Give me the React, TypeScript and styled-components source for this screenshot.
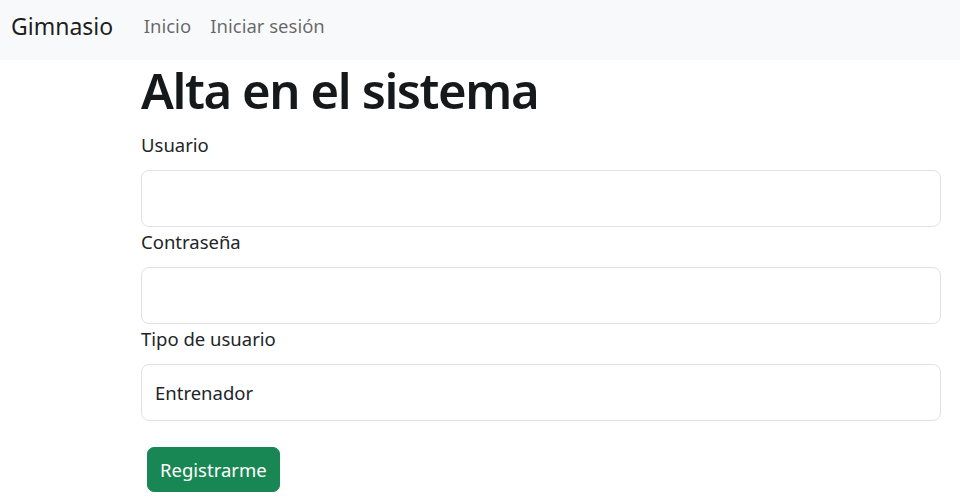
import styled, { createGlobalStyle } from "styled-components";

const GlobalStyle = createGlobalStyle`
  html, body {
    margin: 0;
    padding: 0;
    background: #fff;
    color: #212529;
    font-family: "Noto Sans", "Open Sans", sans-serif;
  }
  * {
    box-sizing: border-box;
  }
`;

const Navbar = styled.nav`
  display: flex;
  align-items: flex-start;
  height: 60px;
  padding: 8px 11px;
  background-color: #f8f9fa;
`;

const Brand = styled.a`
  font-size: 23px;
  line-height: 36px;
  color: rgba(0, 0, 0, 0.9);
  text-decoration: none;
  margin-right: 21px;
`;

const NavLinks = styled.ul`
  display: flex;
  list-style: none;
  margin: 0;
  padding: 0;
`;

const NavLink = styled.a`
  display: block;
  padding: 0 9.6px;
  font-size: 18.5px;
  line-height: 36px;
  color: rgba(0, 0, 0, 0.6);
  text-decoration: none;
`;

const Main = styled.main`
  padding: 0 19px 0 141px;
`;

const Title = styled.h1`
  margin: 0 0 10px;
  font-size: 49px;
  line-height: 60px;
  font-weight: 600;
  letter-spacing: -1.4px;
  color: #16191c;
`;

const Form = styled.form`
  display: flex;
  flex-direction: column;
`;

const Label = styled.label`
  display: block;
  font-size: 18.5px;
  line-height: 30px;
  margin-bottom: 10px;
`;

const Field = styled.input`
  display: block;
  width: 100%;
  height: 57px;
  padding: 0 13px;
  font-family: inherit;
  font-size: 18.5px;
  color: #212529;
  background: #fff;
  border: 1px solid #dee2e6;
  border-radius: 8px;
  outline: none;
`;

const Select = styled.select`
  display: block;
  width: 100%;
  height: 57px;
  padding: 0 13px;
  font-family: inherit;
  font-size: 18.5px;
  color: #212529;
  background: #fff;
  border: 1px solid #dee2e6;
  border-radius: 8px;
  appearance: none;
  outline: none;
`;

const Actions = styled.div`
  padding: 26px 0 0 6px;
`;

const Button = styled.button`
  height: 45px;
  padding: 0 12px;
  font-family: inherit;
  font-size: 18.5px;
  color: #fff;
  background-color: #198754;
  border: 1px solid #198754;
  border-radius: 7px;
  cursor: pointer;
`;

export default function App() {
  return (
    <>
      <GlobalStyle />
      <Navbar>
        <Brand href="#">Gimnasio</Brand>
        <NavLinks>
          <li>
            <NavLink href="#">Inicio</NavLink>
          </li>
          <li>
            <NavLink href="#">Iniciar sesión</NavLink>
          </li>
        </NavLinks>
      </Navbar>
      <Main>
        <Title>Alta en el sistema</Title>
        <Form onSubmit={(e) => e.preventDefault()}>
          <Label htmlFor="usuario">Usuario</Label>
          <Field id="usuario" type="text" />
          <Label htmlFor="clave">Contraseña</Label>
          <Field id="clave" type="password" />
          <Label htmlFor="tipo">Tipo de usuario</Label>
          <Select id="tipo" defaultValue="entrenador">
            <option value="entrenador">Entrenador</option>
            <option value="cliente">Cliente</option>
          </Select>
          <Actions>
            <Button type="submit">Registrarme</Button>
          </Actions>
        </Form>
      </Main>
    </>
  );
}
